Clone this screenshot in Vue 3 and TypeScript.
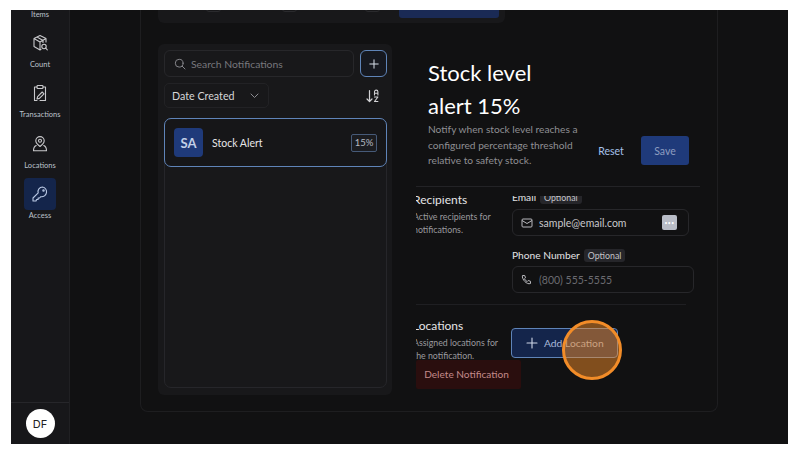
<template>
  <div class="page">
    <div class="app">
      <aside class="sidebar">
        <div class="nav">
          <div class="nav-item first"><span class="nav-label">Items</span></div>
          <div class="nav-item">
            <span class="nav-icon">
              <svg width="18" height="18" viewBox="0 0 18 18" fill="none" stroke="#c9c9cc" stroke-width="1.1" stroke-linejoin="round" stroke-linecap="round">
                <path d="M9 1.5 15 4.5V8M9 1.5 3 4.5v8l6 3.5 1-.6M3 4.5 9 8l6-3.5M9 8v8M6 3l6 3.4v2" />
                <circle cx="13" cy="12.5" r="2.2" />
                <path d="m14.7 14.2 1.6 1.6" />
              </svg>
            </span>
            <span class="nav-label">Count</span>
          </div>
          <div class="nav-item">
            <span class="nav-icon">
              <svg width="18" height="18" viewBox="0 0 18 18" fill="none" stroke="#c9c9cc" stroke-width="1.1" stroke-linejoin="round" stroke-linecap="round">
                <path d="M6 3H3.5v13.5H6M12 3h2.5v13.5H9" />
                <rect x="6" y="1.5" width="6" height="3" rx=".8" />
                <path d="m6 15 .6-2.4 4.6-4.6 1.8 1.8-4.6 4.6z" />
              </svg>
            </span>
            <span class="nav-label">Transactions</span>
          </div>
          <div class="nav-item">
            <span class="nav-icon">
              <svg width="18" height="18" viewBox="0 0 18 18" fill="none" stroke="#c9c9cc" stroke-width="1.1" stroke-linejoin="round" stroke-linecap="round">
                <path d="M9 11.5C6.8 9.8 4.8 8.2 4.8 5.8a4.2 4.2 0 0 1 8.4 0c0 2.4-2 4-4.2 5.7Z" />
                <circle cx="9" cy="5.8" r="1.5" />
                <path d="M5.2 10.5C3.5 11.2 2.5 12.8 2.5 15.8h13c0-3-1-4.6-2.7-5.3" />
              </svg>
            </span>
            <span class="nav-label">Locations</span>
          </div>
          <div class="nav-item">
            <span class="nav-icon active">
              <svg width="18" height="18" viewBox="0 0 18 18" fill="none" stroke="#b9c8e4" stroke-width="1.1" stroke-linejoin="round" stroke-linecap="round">
                <path d="M11.5 2A4.5 4.5 0 0 0 7.2 7.8L2 13v3h3l.6-1.5h1.5V13h1.5l1.2-1.3A4.5 4.5 0 1 0 11.5 2Z" />
                <circle cx="12.5" cy="5.5" r=".7" />
              </svg>
            </span>
            <span class="nav-label">Access</span>
          </div>
        </div>
        <div class="user">
          <div class="avatar">DF</div>
        </div>
      </aside>

      <main class="main">
        <section class="outer">
          <div class="strip">
            <span class="strip-box box-a"></span>
            <span class="strip-box box-b"></span>
            <span class="strip-box box-c"></span>
            <span class="strip-button"></span>
          </div>
          <div class="content">
            <div class="list-panel">
              <div class="search-row">
                <div class="search">
                  <svg width="12" height="12" viewBox="0 0 12 12" fill="none" stroke="#85858a" stroke-width="1" stroke-linecap="round">
                    <circle cx="5.2" cy="5.2" r="3.9" />
                    <path d="m8.2 8.2 2.8 2.8" />
                  </svg>
                  <span>Search Notifications</span>
                </div>
                <button class="add-btn" type="button">
                  <svg width="10" height="10" viewBox="0 0 10 10" stroke="#d7deea" stroke-width="1" stroke-linecap="round">
                    <path d="M5 .8v8.4M.8 5h8.4" />
                  </svg>
                </button>
              </div>
              <div class="sort-row">
                <div class="sort-select">
                  <span>Date Created</span>
                  <svg width="9" height="6" viewBox="0 0 9 6" fill="none" stroke="#8c8c91" stroke-width="1" stroke-linecap="round" stroke-linejoin="round">
                    <path d="m1 1 3.5 3.5L8 1" />
                  </svg>
                </div>
                <span class="sort-icon">
                  <svg width="13" height="14" viewBox="0 0 13 14" fill="none" stroke="#d2d2d5" stroke-width="1.2" stroke-linecap="round" stroke-linejoin="round">
                    <path d="M3.5 1.5V12.5M1 10l2.5 2.5L6 10" />
                    <path d="M8.5 6V2.8a1.7 1.7 0 0 1 3.4 0V6M8.5 4.3h3.4M8.5 8h3.4L8.5 12.5h3.4" stroke-width="1.1" />
                  </svg>
                </span>
              </div>
              <div class="list">
                <div class="alert-row">
                  <span class="initials">SA</span>
                  <span class="alert-name">Stock Alert</span>
                  <span class="percent">15%</span>
                </div>
              </div>
            </div>

            <div class="detail">
              <header class="detail-head">
                <div class="head-text">
                  <h1>Stock level alert 15%</h1>
                  <p>Notify when stock level reaches a configured percentage threshold relative to safety stock.</p>
                </div>
                <button class="reset" type="button">Reset</button>
                <button class="save" type="button">Save</button>
              </header>
              <div class="scroll">
                <div class="scroll-inner">
                  <div class="group recipients">
                    <div class="group-text">
                      <h2>Recipients</h2>
                      <p>Active recipients for notifications.</p>
                    </div>
                    <div class="fields">
                      <div class="field">
                        <div class="label">Email <span class="tag">Optional</span></div>
                        <div class="input email">
                          <svg width="12" height="12" viewBox="0 0 12 12" fill="none" stroke="#b9b9bd" stroke-width="1" stroke-linejoin="round">
                            <rect x="1" y="2" width="10" height="8" rx="1" />
                            <path d="m1 3.5 5 3 5-3" />
                          </svg>
                          <span class="value">sample@email.com</span>
                          <span class="dots">•••</span>
                        </div>
                      </div>
                      <div class="field">
                        <div class="label">Phone Number <span class="tag">Optional</span></div>
                        <div class="input phone">
                          <svg width="12" height="12" viewBox="0 0 12 12" fill="none" stroke="#b9b9bd" stroke-width="1" stroke-linejoin="round">
                            <path d="M1.5 1.5h2.2l.8 2.3-1.1 1c.6 1.2 1.5 2.1 2.8 2.8l1-1.1 2.3.8v2.2c-.9.4-2 .3-3-.1C4.5 8.5 3 7 1.8 4.5c-.5-1-.6-2.1-.3-3Z" />
                          </svg>
                          <span class="placeholder">(800) 555-5555</span>
                        </div>
                      </div>
                    </div>
                  </div>
                  <div class="group locations">
                    <div class="group-text">
                      <h2>Locations</h2>
                      <p>Assigned locations for the notification.</p>
                    </div>
                    <button class="add-location" type="button">
                      <svg width="12" height="12" viewBox="0 0 12 12" stroke="#cfd8e8" stroke-width="1.1" stroke-linecap="round">
                        <path d="M6 1v10M1 6h10" />
                      </svg>
                      <span>Add Location</span>
                    </button>
                  </div>
                  <button class="delete" type="button">Delete Notification</button>
                </div>
              </div>
              <span class="cursor"></span>
            </div>
          </div>
        </section>
      </main>
    </div>
  </div>
</template>

<script setup lang="ts">
</script>

<style>
html,
body {
  margin: 0;
  background: #fff;
}
</style>

<style scoped>
* {
  box-sizing: border-box;
}

.page {
  width: 798px;
  height: 451px;
  padding: 10px 10px 7px 11px;
  overflow: hidden;
  font-family: "Lato", "Open Sans", sans-serif;
}

.app {
  display: flex;
  height: 100%;
  background: #111112;
  color: #fff;
}

.sidebar {
  display: flex;
  flex-direction: column;
  width: 59px;
  flex-shrink: 0;
  background: #17171a;
  border-right: 1px solid #202023;
}

.nav {
  flex: 1;
  display: flex;
  flex-direction: column;
  align-items: center;
}

.nav-item {
  display: flex;
  flex-direction: column;
  align-items: center;
  height: 50.3px;
}

.nav-item.first {
  height: 17px;
}

.nav-icon {
  display: flex;
  align-items: center;
  justify-content: center;
  width: 32px;
  height: 32px;
  margin-bottom: 1px;
  border-radius: 4px;
}

.nav-icon.active {
  background: #14254b;
}

.nav-label {
  font-size: 7.5px;
  line-height: 10px;
  color: #bcc2cc;
  white-space: nowrap;
}

.user {
  display: flex;
  justify-content: center;
  align-items: center;
  height: 42px;
  border-top: 1px solid #26262a;
}

.avatar {
  display: flex;
  align-items: center;
  justify-content: center;
  width: 29px;
  height: 29px;
  border-radius: 50%;
  background: #fff;
  color: #222;
  font-size: 11px;
  font-family: "Inter", sans-serif;
}

.main {
  flex: 1;
  min-width: 0;
  display: flex;
  flex-direction: column;
  justify-content: flex-end;
  padding: 0 70px 32px 70px;
  overflow: hidden;
}

.outer {
  flex-shrink: 0;
  padding: 0 0 16px 17px;
  border: 1px solid #1e1e20;
  border-top: 0;
  border-radius: 0 0 8px 8px;
}

.strip {
  display: flex;
  width: 347px;
  height: 23px;
  background: #18181a;
  border-radius: 0 0 6px 6px;
}

.strip-box {
  width: 15px;
  height: 12px;
  border: 1px solid #2a2a2d;
  border-radius: 3px;
}

.box-a {
  margin-left: 48px;
}

.box-b {
  margin-left: 61px;
}

.box-c {
  margin-left: 68px;
}

.strip-button {
  width: 100px;
  height: 18px;
  margin-left: 19px;
  background: #1a2a55;
  border-radius: 0 0 3px 3px;
}

.content {
  display: flex;
  margin-top: 21px;
}

.list-panel {
  display: flex;
  flex-direction: column;
  width: 234px;
  height: 351px;
  padding: 6px 5px 7px 6px;
  background: #18181a;
  border-radius: 6px;
}

.search-row {
  display: flex;
  gap: 6px;
}

.search {
  flex: 1;
  display: flex;
  align-items: center;
  gap: 5px;
  height: 27px;
  padding-left: 9px;
  border: 1px solid #27272a;
  border-radius: 6px;
  font-size: 10.4px;
  color: #77777c;
}

.add-btn {
  display: flex;
  align-items: center;
  justify-content: center;
  width: 27px;
  height: 27px;
  padding: 0;
  background: #16181f;
  border: 1px solid #5f84b8;
  border-radius: 6px;
}

.sort-row {
  display: flex;
  align-items: center;
  justify-content: space-between;
  margin-top: 6px;
  padding-right: 8px;
}

.sort-select {
  display: flex;
  align-items: center;
  gap: 15px;
  width: 105px;
  height: 25px;
  padding-left: 7px;
  border: 1px solid #222225;
  border-radius: 5px;
  font-size: 10.7px;
  color: #d6d6d8;
}

.sort-icon {
  display: flex;
}

.list {
  flex: 1;
  margin-top: 10px;
  border: 1px solid #26262a;
  border-radius: 7px;
}

.alert-row {
  display: flex;
  align-items: center;
  height: 49px;
  margin: -1px;
  padding: 0 9px;
  background: #161618;
  border: 1px solid #5f84b8;
  border-radius: 7px;
}

.initials {
  display: flex;
  align-items: center;
  justify-content: center;
  width: 29px;
  height: 29px;
  background: #1f3a7a;
  border-radius: 4px;
  font-size: 13px;
  font-weight: 700;
  color: #c3d0e8;
}

.alert-name {
  flex: 1;
  margin-left: 9px;
  font-size: 10.5px;
  color: #e6e6e8;
}

.percent {
  display: flex;
  align-items: center;
  justify-content: center;
  width: 26px;
  height: 18px;
  border: 1px solid #465a78;
  border-radius: 2px;
  background: #1b1c20;
  font-size: 9.5px;
  color: #b6bac2;
}

.detail {
  position: relative;
  flex: 1;
  min-width: 0;
  display: flex;
  flex-direction: column;
  padding: 0 17px 0 24px;
}

.detail-head {
  display: flex;
  align-items: flex-end;
  height: 143px;
  padding: 12px 11px 21px 12px;
  border-bottom: 1px solid #232326;
  flex-shrink: 0;
}

.head-text {
  align-self: flex-start;
  width: 158px;
}

.head-text h1 {
  max-width: 130px;
  margin: 0;
  font-size: 22px;
  font-weight: 400;
  line-height: 33px;
  color: #fff;
}

.head-text p {
  margin: 0;
  font-size: 10.2px;
  line-height: 15.5px;
  color: #8f8f93;
}

.reset {
  width: 50px;
  height: 29px;
  padding: 0;
  background: none;
  border: 0;
  font: inherit;
  font-size: 10.5px;
  color: #a6c2ea;
}

.save {
  width: 48px;
  height: 29px;
  margin-left: 5px;
  padding: 0;
  background: #1f3a7a;
  border: 0;
  border-radius: 3px;
  font: inherit;
  font-size: 10.5px;
  color: #8d9dc0;
}

.scroll {
  flex: 1;
  min-height: 0;
  margin-top: 9px;
  overflow: hidden;
}

.scroll-inner {
  margin-top: -6px;
}

.group {
  display: flex;
}

.group-text {
  width: 99px;
  margin-left: -3px;
  flex-shrink: 0;
}

.group-text h2 {
  margin: 0;
  font-size: 12px;
  font-weight: 400;
  line-height: 14px;
  color: #e5e5e7;
}

.group-text p {
  margin: 3px 0 0;
  font-size: 8.8px;
  line-height: 13px;
  color: #9a9a9e;
}

.recipients {
  padding-bottom: 11px;
  border-bottom: 1px solid #1f1f22;
  width: 270px;
}

.recipients .group-text {
  padding-top: 3px;
}

.fields {
  display: flex;
  flex-direction: column;
  gap: 12px;
  width: 182px;
  flex-shrink: 0;
}

.label {
  display: flex;
  align-items: center;
  gap: 4px;
  height: 14px;
  font-size: 10.2px;
  color: #e2e2e4;
}

.tag {
  padding: 0 4px;
  height: 13px;
  line-height: 13px;
  background: #26262a;
  border-radius: 3px;
  font-size: 8.8px;
  color: #c4c4c8;
}

.input {
  display: flex;
  align-items: center;
  height: 27px;
  margin-top: 4px;
  padding: 0 11px 0 8px;
  border: 1px solid #27272a;
  border-radius: 6px;
  font-size: 10.5px;
}

.input.email {
  width: 177px;
  margin-top: 5px;
}

.input svg {
  margin-right: 6px;
}

.value {
  flex: 1;
  color: #c8c8cb;
}

.placeholder {
  color: #6b6b70;
}

.dots {
  display: flex;
  align-items: center;
  justify-content: center;
  width: 15px;
  height: 15px;
  background: #b8bcc6;
  border-radius: 2px;
  font-size: 5px;
  letter-spacing: .5px;
  color: #fff;
}

.locations {
  height: 53px;
  padding-top: 14px;
}

.add-location {
  display: flex;
  align-items: center;
  gap: 6px;
  width: 107px;
  height: 30px;
  margin: 9px 0 0 -1px;
  padding: 0 0 0 14px;
  background: #14254b;
  border: 1px solid #5f84b8;
  border-radius: 4px;
  font: inherit;
  font-size: 10.3px;
  color: #a8b8d8;
  white-space: nowrap;
}

.delete {
  position: relative;
  display: block;
  width: 105px;
  height: 29px;
  margin-top: 2px;
  padding: 0 4px 2px 0;
  background: #2a0e0e;
  border: 0;
  border-radius: 2px;
  font: inherit;
  font-size: 10.1px;
  color: #c48a8a;
}

.cursor {
  position: absolute;
  left: 170px;
  top: 276px;
  width: 60px;
  height: 60px;
  background: rgba(242, 140, 40, .5);
  border: 3px solid #f28c28;
  border-radius: 50%;
}
</style>
